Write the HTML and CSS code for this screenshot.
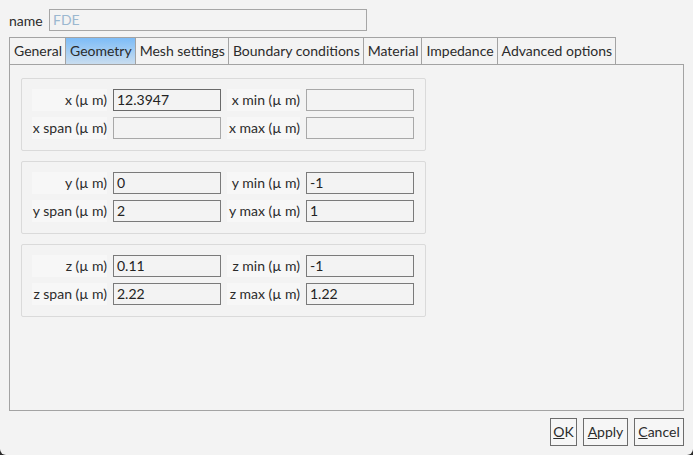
FILE: index.html
```html
<!DOCTYPE html>
<html>
<head>
<meta charset="utf-8">
<link rel="stylesheet" href="styles.css">
</head>
<body>
<div class="dialog">
  <div class="name-row">
    <span class="name-label">name</span>
    <div class="name-input">FDE</div>
  </div>
  <div class="tabs">
    <div class="tab">General</div>
    <div class="tab active">Geometry</div>
    <div class="tab">Mesh settings</div>
    <div class="tab">Boundary conditions</div>
    <div class="tab">Material</div>
    <div class="tab">Impedance</div>
    <div class="tab">Advanced options</div>
  </div>
  <div class="panel">
    <div class="group">
      <div class="lbl">x (µ m)</div><div class="field focus">12.3947</div>
      <div class="lbl">x min (µ m)</div><div class="field dim"></div>
      <div class="lbl">x span (µ m)</div><div class="field dim"></div>
      <div class="lbl">x max (µ m)</div><div class="field dim"></div>
    </div>
    <div class="group">
      <div class="lbl">y (µ m)</div><div class="field">0</div>
      <div class="lbl">y min (µ m)</div><div class="field">-1</div>
      <div class="lbl">y span (µ m)</div><div class="field">2</div>
      <div class="lbl">y max (µ m)</div><div class="field">1</div>
    </div>
    <div class="group">
      <div class="lbl">z (µ m)</div><div class="field">0.11</div>
      <div class="lbl">z min (µ m)</div><div class="field">-1</div>
      <div class="lbl">z span (µ m)</div><div class="field">2.22</div>
      <div class="lbl">z max (µ m)</div><div class="field">1.22</div>
    </div>
  </div>
  <div class="buttons">
    <div class="btn ok"><u>O</u>K</div>
    <div class="btn apply"><u>A</u>pply</div>
    <div class="btn cancel"><u>C</u>ancel</div>
  </div>
</div>
</body>
</html>
```
FILE: styles.css
```css
html { background: #2a2a2a; }
body {
  margin: 0;
  font-family: "Lato", "Noto Sans", sans-serif;
  font-size: 14px;
  color: #2b2b2b;
}
.dialog {
  width: 693px;
  height: 455px;
  box-sizing: border-box;
  background: #f3f3f3;
  border-radius: 0 0 6px 6px;
  padding: 9px 9px 0 9px;
}
.name-row {
  display: flex;
  align-items: center;
  height: 22px;
}
.name-label {
  width: 40px;
}
.name-input {
  width: 318px;
  height: 22px;
  box-sizing: border-box;
  border: 1px solid #a6a6a6;
  color: #9bb8d0;
  padding: 0 0 0 3px;
  line-height: 20px;
}
.tabs {
  display: flex;
  margin-top: 6px;
  height: 27px;
}
.tab {
  box-sizing: border-box;
  height: 27px;
  border: 1px solid #a3a3a3;
  border-bottom: none;
  margin-left: -1px;
  padding: 0 3px 0 4px;
  line-height: 26px;
  background: #f3f3f3;
}
.tab:first-child { margin-left: 0; }
.tab.active {
  background: linear-gradient(#7dbcf7, #c9ddef);
}
.panel {
  width: 675px;
  height: 347px;
  box-sizing: border-box;
  border: 1px solid #a3a3a3;
  padding: 13px 0 0 11px;
  display: flex;
  flex-direction: column;
  gap: 10px;
}
.group {
  width: 405px;
  box-sizing: border-box;
  border: 1px solid #dadada;
  border-radius: 2px;
  padding: 10px 11px 11px 10px;
  display: grid;
  grid-template-columns: 75px 108px 73px 108px;
  column-gap: 6px;
  row-gap: 6px;
}
.lbl {
  background: #f7f7f7;
  height: 22px;
  line-height: 22px;
  text-align: right;
  white-space: nowrap;
}
.field {
  height: 22px;
  box-sizing: border-box;
  border: 1px solid #7a7a7a;
  padding-left: 3px;
  line-height: 20px;
  color: #222;
}
.field.dim { border-color: #a8a8a8; }
.field.focus { border-color: #6a6a6a; }
.buttons {
  display: flex;
  justify-content: flex-end;
  gap: 6px;
  margin-top: 7px;
}
.btn {
  height: 28px;
  box-sizing: border-box;
  border: 1px solid #6c6c6c;
  background: #f6f6f6;
  line-height: 26px;
  text-align: center;
}
.btn.ok { width: 27px; }
.btn.apply { width: 45px; }
.btn.cancel { width: 50px; }
```
